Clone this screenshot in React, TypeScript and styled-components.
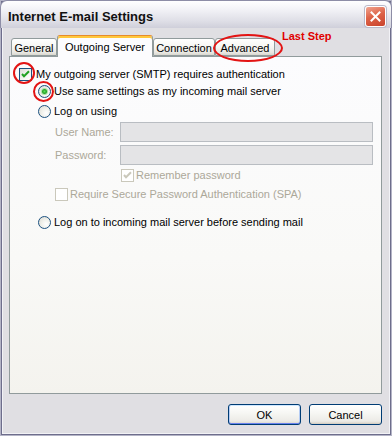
import React from "react";
import styled, { createGlobalStyle } from "styled-components";

const GlobalStyle = createGlobalStyle`
  html, body { margin: 0; padding: 0; background: #fff; }
  body { font-family: "Liberation Sans", Arial, sans-serif; font-size: 11px; color: #000; }
  * { box-sizing: border-box; }
`;

const Window = styled.div`
  position: relative;
  width: 392px;
  height: 436px;
  display: flex;
  flex-direction: column;
  background: #e0dfe3;
  box-shadow: inset 0 0 0 1px #b4b4c6, inset 0 0 0 2px #6e6e8c, inset 0 0 0 3px #f2f2f6;
  overflow: hidden;
`;

const TitleBar = styled.div`
  height: 28px;
  flex: none;
  display: flex;
  align-items: center;
  justify-content: space-between;
  padding: 3px 5px 0 7px;
  border-radius: 7px 7px 0 0;
  border: 1px solid #8d8da6;
  border-bottom: none;
  background: linear-gradient(#ffffff 0%, #f3f3f7 30%, #dedee6 75%, #cfcfda 100%);
`;

const Title = styled.span`
  font-family: "Liberation Sans", Arial, sans-serif;
  font-weight: bold;
  font-size: 13px;
  color: #111;
`;

const CloseButton = styled.div`
  width: 21px;
  height: 21px;
  border-radius: 3px;
  border: 1px solid #fff;
  box-shadow: 0 0 0 1px #b9b9c9;
  background: linear-gradient(160deg, #f0a48f 0%, #de6449 45%, #c9432c 100%);
  display: flex;
  align-items: center;
  justify-content: center;
`;

const Body = styled.div`
  flex: 1;
  display: flex;
  flex-direction: column;
  padding: 7px 10px 11px 9px;
`;

const TabStrip = styled.div`
  height: 21px;
  display: flex;
  align-items: flex-end;
  padding-left: 2px;
  position: relative;
  z-index: 1;
`;

const Tab = styled.div<{ $active?: boolean; $w: number }>`
  width: ${(p) => p.$w}px;
  height: ${(p) => (p.$active ? 22 : 18)}px;
  margin-bottom: ${(p) => (p.$active ? -1 : 0)}px;
  display: flex;
  justify-content: center;
  align-items: center;
  padding-top: ${(p) => (p.$active ? 0 : 1)}px;
  white-space: nowrap;
  border: 1px solid #919b9c;
  border-bottom: ${(p) => (p.$active ? "none" : "1px solid #919b9c")};
  border-top-color: ${(p) => (p.$active ? "#e68b2c" : "#919b9c")};
  border-radius: 3px 3px 0 0;
  background: ${(p) =>
    p.$active ? "#fcfcfe" : "linear-gradient(#ffffff 0%, #f6f6f3 50%, #e8e7e2 85%, #d9d7cf 100%)"};
  box-shadow: ${(p) => (p.$active ? "inset 0 2px 0 #ffc83c" : "none")};
`;

const Panel = styled.div`
  height: 338px;
  flex: none;
  border: 1px solid #919b9c;
  background: linear-gradient(#fcfcfe 0%, #f9f9f7 60%, #f4f3ee 100%);
  display: flex;
  flex-direction: column;
`;

const Row = styled.div<{ $indent: number; $top: number }>`
  display: flex;
  align-items: center;
  margin-left: ${(p) => p.$indent}px;
  margin-top: ${(p) => p.$top}px;
  min-height: 13px;
`;

const Label = styled.span<{ $gap: number; $disabled?: boolean }>`
  margin-left: ${(p) => p.$gap}px;
  line-height: 13px;
  white-space: nowrap;
  color: ${(p) => (p.$disabled ? "#aca899" : "#000")};
`;

const FieldLabel = styled.span`
  width: 65px;
  color: #aca899;
  white-space: nowrap;
`;

const TextInput = styled.div`
  width: 253px;
  height: 20px;
  border: 1px solid #b9bdc2;
  background: #e4e4e6;
`;

const Box = styled.span<{ $disabled?: boolean }>`
  width: 13px;
  height: 13px;
  flex: none;
  display: inline-flex;
  align-items: center;
  justify-content: center;
  border: 1px solid ${(p) => (p.$disabled ? "#cac8bb" : "#1c5180")};
  background: ${(p) => (p.$disabled ? "#ffffff" : "linear-gradient(135deg, #dcdcd7 0%, #f5f5f1 60%, #ffffff 100%)")};
`;

const RadioCircle = styled.span`
  width: 13px;
  height: 13px;
  flex: none;
  border-radius: 50%;
  border: 1px solid #1c5180;
  background: radial-gradient(circle at 65% 65%, #ffffff 0%, #f0f0ea 45%, #d8d8d2 100%);
  display: inline-flex;
  align-items: center;
  justify-content: center;
`;

const RadioDot = styled.span`
  width: 5px;
  height: 5px;
  border-radius: 50%;
  background: radial-gradient(circle, #5ede5e 0%, #21a121 60%, #1a8a1a 100%);
  box-shadow: 0 0 0 1px #a6e6a6;
`;

const Footer = styled.div`
  display: flex;
  justify-content: flex-end;
  gap: 8px;
  margin-top: 10px;
`;

const Button = styled.div<{ $default?: boolean }>`
  width: 73px;
  height: 21px;
  display: flex;
  align-items: center;
  justify-content: center;
  border: 1px solid #003c74;
  border-radius: 3px;
  background: linear-gradient(#ffffff 0%, #f7f7f4 40%, #ecebe6 85%, #d6d0c5 100%);
  box-shadow: ${(p) =>
    p.$default
      ? "inset 0 1px 0 #cee7ff, inset 0 -1px 0 #6982ee, inset 1px 0 0 #b6cdf4, inset -1px 0 0 #b6cdf4"
      : "inset 0 -1px 0 #d6d0c5"};
`;

const RedRing = styled.div<{ $x: number; $y: number; $w: number; $h: number }>`
  position: absolute;
  left: ${(p) => p.$x}px;
  top: ${(p) => p.$y}px;
  width: ${(p) => p.$w}px;
  height: ${(p) => p.$h}px;
  border: 2px solid #e31414;
  border-radius: 50%;
  pointer-events: none;
  z-index: 5;
`;

const Note = styled.div`
  position: absolute;
  left: 282px;
  top: 30px;
  font-family: "Liberation Sans", Arial, sans-serif;
  font-weight: bold;
  font-size: 11px;
  line-height: 12px;
  color: #e00000;
  z-index: 5;
`;

const Check = ({ color }: { color: string }) => (
  <svg width="9" height="9" viewBox="0 0 9 9">
    <path d="M1 4 L3 6.2 L8 1.2" fill="none" stroke={color} strokeWidth="2" />
  </svg>
);

const Checkbox = ({ checked, disabled }: { checked?: boolean; disabled?: boolean }) => (
  <Box $disabled={disabled}>{checked && <Check color={disabled ? "#cac8bb" : "#21a121"} />}</Box>
);

const Radio = ({ checked }: { checked?: boolean }) => (
  <RadioCircle>{checked && <RadioDot />}</RadioCircle>
);

export default function App() {
  return (
    <>
      <GlobalStyle />
      <Window>
        <TitleBar>
          <Title>Internet E-mail Settings</Title>
          <CloseButton>
            <svg width="11" height="11" viewBox="0 0 11 11">
              <path d="M1.5 1.5 L9.5 9.5 M9.5 1.5 L1.5 9.5" stroke="#fff" strokeWidth="2" strokeLinecap="square" />
            </svg>
          </CloseButton>
        </TitleBar>
        <Body>
          <TabStrip>
            <Tab $w={46}>General</Tab>
            <Tab $w={96} $active>Outgoing Server</Tab>
            <Tab $w={62}>Connection</Tab>
            <Tab $w={60}>Advanced</Tab>
          </TabStrip>
          <Panel>
            <Row $indent={9} $top={11}>
              <Checkbox checked />
              <Label $gap={4}>My outgoing server (SMTP) requires authentication</Label>
            </Row>
            <Row $indent={28} $top={4}>
              <Radio checked />
              <Label $gap={3}>Use same settings as my incoming mail server</Label>
            </Row>
            <Row $indent={28} $top={7}>
              <Radio />
              <Label $gap={3}>Log on using</Label>
            </Row>
            <Row $indent={45} $top={4}>
              <FieldLabel>User Name:</FieldLabel>
              <TextInput />
            </Row>
            <Row $indent={45} $top={3}>
              <FieldLabel>Password:</FieldLabel>
              <TextInput />
            </Row>
            <Row $indent={111} $top={4}>
              <Checkbox checked disabled />
              <Label $gap={2} $disabled>Remember password</Label>
            </Row>
            <Row $indent={45} $top={6}>
              <Checkbox disabled />
              <Label $gap={2} $disabled>Require Secure Password Authentication (SPA)</Label>
            </Row>
            <Row $indent={28} $top={15}>
              <Radio />
              <Label $gap={3}>Log on to incoming mail server before sending mail</Label>
            </Row>
          </Panel>
          <Footer>
            <Button $default>OK</Button>
            <Button>Cancel</Button>
          </Footer>
        </Body>
        <RedRing $x={213} $y={34} $w={70} $h={28} />
        <RedRing $x={13} $y={62} $w={22} $h={22} />
        <RedRing $x={33} $y={81} $w={21} $h={21} />
        <Note>Last Step</Note>
      </Window>
    </>
  );
}
